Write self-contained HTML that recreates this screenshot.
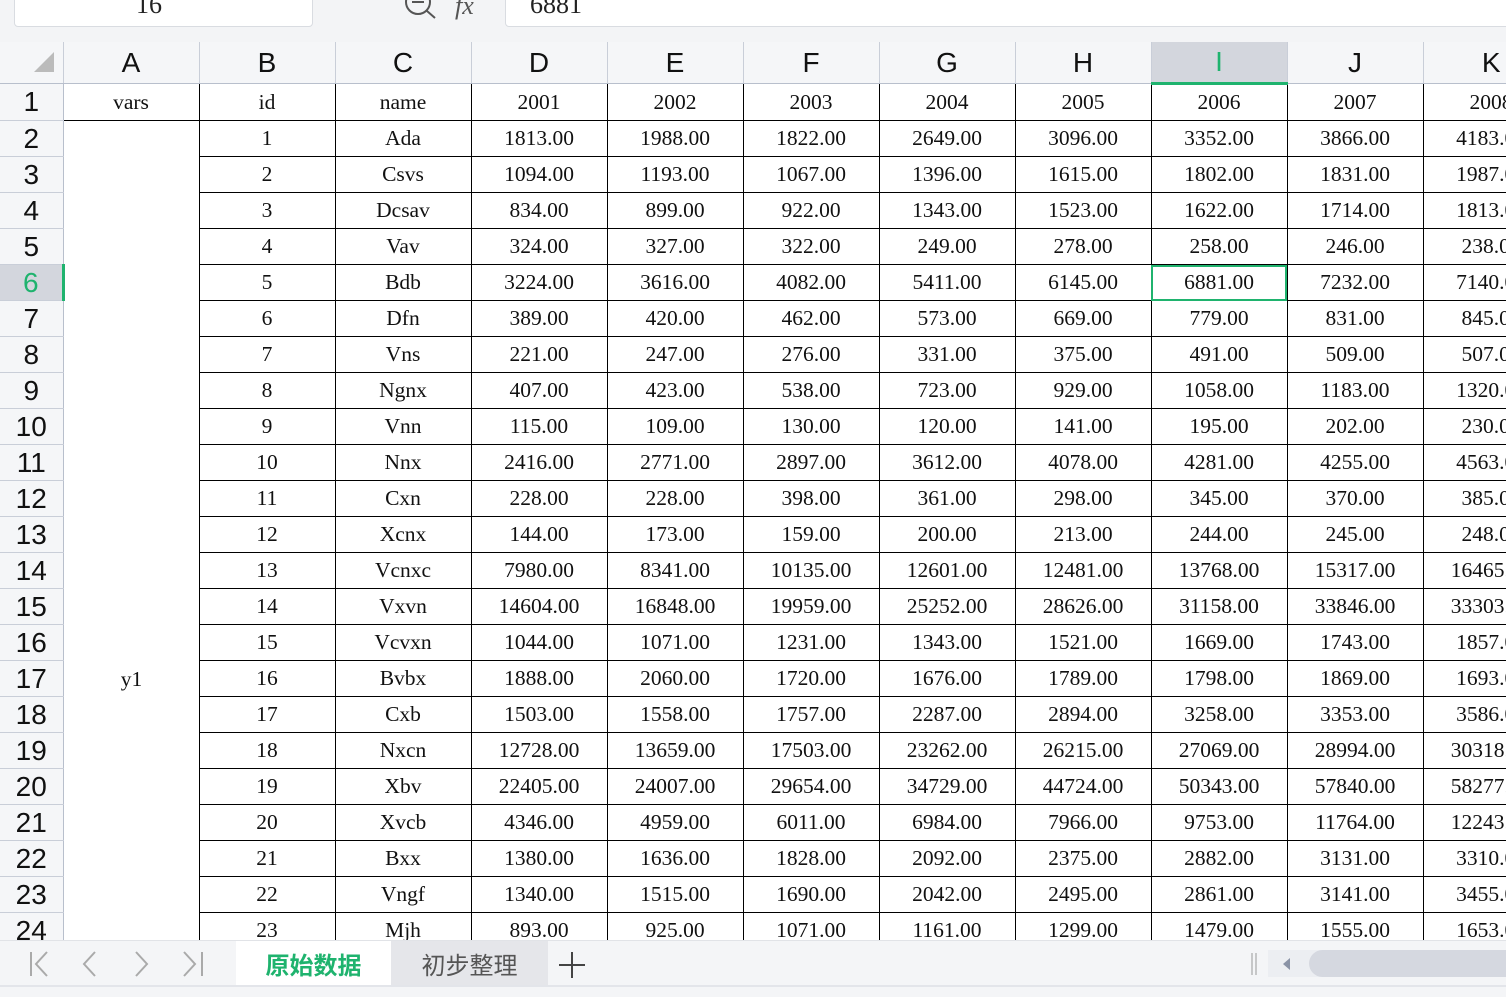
<!DOCTYPE html>
<html><head><meta charset="utf-8"><style>
body{margin:0;width:1506px;height:995px;overflow:hidden;background:#f3f4f6;position:relative;font-family:"Liberation Serif",serif}
.top{position:absolute;left:0;top:0;width:1506px;height:42px;background:#f3f4f6}
.nb{position:absolute;left:14px;top:-6px;width:297px;height:31px;background:#fff;border:1px solid #d9dce1;border-radius:4px;font:26px "Liberation Serif",serif;color:#222;text-indent:121px;line-height:20px}
.fx{position:absolute;left:505px;top:-6px;width:1010px;height:31px;background:#fff;border:1px solid #d9dce1;border-radius:4px;font:26px "Liberation Serif",serif;color:#222;text-indent:24px;line-height:20px}
table{position:absolute;left:0;top:42px;border-collapse:collapse;table-layout:fixed;width:1559px;background:#fff}
td{height:35px;padding:0;text-align:center;font-size:21.5px;color:#111;border:1px solid #000;white-space:nowrap;overflow:hidden}
tr.h td{height:40px;background:#f5f6f8;border:none;border-left:1px solid #c9ced8;border-bottom:1px solid #b8bfcc;font:28px "Liberation Sans",sans-serif;color:#111;padding:0}
td.r{background:#f5f6f8;border:none;border-right:1px solid #b8bfcc;border-bottom:1px solid #c9ced8;font:28px "Liberation Sans",sans-serif;color:#111;text-align:center}
td.sel{background:#d3d6dd!important;color:#1fb36e!important}
tr.h td.sel{border-bottom:3px solid #1fb36e}
td.r.sel{border-right:3px solid #1fb36e}
td.a{border-left:none}
td.cur{outline:2px solid #1fb36e;outline-offset:-2px}
.tabs{position:absolute;left:0;top:940px;width:1506px;height:45px;background:#f4f5f7;border-top:1px solid #e1e3e7}
.bot{position:absolute;left:0;top:985px;width:1506px;height:10px;background:#f4f5f7;border-top:2px solid #e3e5ea}
.t1{position:absolute;left:236px;top:0;width:155px;height:45px;background:#fff;color:#1fb36e;font:bold 24px "Noto Sans CJK SC",sans-serif;text-align:center;line-height:46px}
.t2{position:absolute;left:391px;top:0;width:157px;height:45px;background:#e5e6ea;color:#555;font:24px "Noto Sans CJK SC",sans-serif;text-align:center;line-height:46px}
</style></head><body>
<div class="top"><div class="nb">16</div>
<svg style="position:absolute;left:400px;top:0" width="90" height="22"><circle cx="18" cy="2" r="12" fill="none" stroke="#555" stroke-width="2"/><line x1="27" y1="11" x2="35" y2="18" stroke="#555" stroke-width="2"/><line x1="12" y1="2" x2="24" y2="2" stroke="#555" stroke-width="2"/><text x="55" y="14" font-size="26" font-style="italic" fill="#555" font-family="Liberation Serif">fx</text></svg>
<div class="fx">6881</div></div>
<table>
<colgroup><col style="width:63px"><col style="width:136px" span="11"></colgroup>
<tr class="h"><td style="border-left:none"><svg width="24" height="24" style="margin-left:26px;margin-top:6px"><polygon points="22,2 22,22 2,22" fill="#bbb"/></svg></td><td>A</td><td>B</td><td>C</td><td>D</td><td>E</td><td>F</td><td>G</td><td>H</td><td class="sel">I</td><td>J</td><td>K</td></tr>
<tr><td class="r">1</td><td class="a">vars</td><td>id</td><td>name</td><td>2001</td><td>2002</td><td>2003</td><td>2004</td><td>2005</td><td>2006</td><td>2007</td><td>2008</td></tr>
<tr><td class="r">2</td><td class="a" rowspan="23" style="border-bottom:none;vertical-align:top"><div style="padding-top:546px">y1</div></td><td>1</td><td>Ada</td><td>1813.00</td><td>1988.00</td><td>1822.00</td><td>2649.00</td><td>3096.00</td><td>3352.00</td><td>3866.00</td><td>4183.00</td></tr>
<tr><td class="r">3</td><td>2</td><td>Csvs</td><td>1094.00</td><td>1193.00</td><td>1067.00</td><td>1396.00</td><td>1615.00</td><td>1802.00</td><td>1831.00</td><td>1987.00</td></tr>
<tr><td class="r">4</td><td>3</td><td>Dcsav</td><td>834.00</td><td>899.00</td><td>922.00</td><td>1343.00</td><td>1523.00</td><td>1622.00</td><td>1714.00</td><td>1813.00</td></tr>
<tr><td class="r">5</td><td>4</td><td>Vav</td><td>324.00</td><td>327.00</td><td>322.00</td><td>249.00</td><td>278.00</td><td>258.00</td><td>246.00</td><td>238.00</td></tr>
<tr><td class="r sel">6</td><td>5</td><td>Bdb</td><td>3224.00</td><td>3616.00</td><td>4082.00</td><td>5411.00</td><td>6145.00</td><td class="cur">6881.00</td><td>7232.00</td><td>7140.00</td></tr>
<tr><td class="r">7</td><td>6</td><td>Dfn</td><td>389.00</td><td>420.00</td><td>462.00</td><td>573.00</td><td>669.00</td><td>779.00</td><td>831.00</td><td>845.00</td></tr>
<tr><td class="r">8</td><td>7</td><td>Vns</td><td>221.00</td><td>247.00</td><td>276.00</td><td>331.00</td><td>375.00</td><td>491.00</td><td>509.00</td><td>507.00</td></tr>
<tr><td class="r">9</td><td>8</td><td>Ngnx</td><td>407.00</td><td>423.00</td><td>538.00</td><td>723.00</td><td>929.00</td><td>1058.00</td><td>1183.00</td><td>1320.00</td></tr>
<tr><td class="r">10</td><td>9</td><td>Vnn</td><td>115.00</td><td>109.00</td><td>130.00</td><td>120.00</td><td>141.00</td><td>195.00</td><td>202.00</td><td>230.00</td></tr>
<tr><td class="r">11</td><td>10</td><td>Nnx</td><td>2416.00</td><td>2771.00</td><td>2897.00</td><td>3612.00</td><td>4078.00</td><td>4281.00</td><td>4255.00</td><td>4563.00</td></tr>
<tr><td class="r">12</td><td>11</td><td>Cxn</td><td>228.00</td><td>228.00</td><td>398.00</td><td>361.00</td><td>298.00</td><td>345.00</td><td>370.00</td><td>385.00</td></tr>
<tr><td class="r">13</td><td>12</td><td>Xcnx</td><td>144.00</td><td>173.00</td><td>159.00</td><td>200.00</td><td>213.00</td><td>244.00</td><td>245.00</td><td>248.00</td></tr>
<tr><td class="r">14</td><td>13</td><td>Vcnxc</td><td>7980.00</td><td>8341.00</td><td>10135.00</td><td>12601.00</td><td>12481.00</td><td>13768.00</td><td>15317.00</td><td>16465.00</td></tr>
<tr><td class="r">15</td><td>14</td><td>Vxvn</td><td>14604.00</td><td>16848.00</td><td>19959.00</td><td>25252.00</td><td>28626.00</td><td>31158.00</td><td>33846.00</td><td>33303.00</td></tr>
<tr><td class="r">16</td><td>15</td><td>Vcvxn</td><td>1044.00</td><td>1071.00</td><td>1231.00</td><td>1343.00</td><td>1521.00</td><td>1669.00</td><td>1743.00</td><td>1857.00</td></tr>
<tr><td class="r">17</td><td>16</td><td>Bvbx</td><td>1888.00</td><td>2060.00</td><td>1720.00</td><td>1676.00</td><td>1789.00</td><td>1798.00</td><td>1869.00</td><td>1693.00</td></tr>
<tr><td class="r">18</td><td>17</td><td>Cxb</td><td>1503.00</td><td>1558.00</td><td>1757.00</td><td>2287.00</td><td>2894.00</td><td>3258.00</td><td>3353.00</td><td>3586.00</td></tr>
<tr><td class="r">19</td><td>18</td><td>Nxcn</td><td>12728.00</td><td>13659.00</td><td>17503.00</td><td>23262.00</td><td>26215.00</td><td>27069.00</td><td>28994.00</td><td>30318.00</td></tr>
<tr><td class="r">20</td><td>19</td><td>Xbv</td><td>22405.00</td><td>24007.00</td><td>29654.00</td><td>34729.00</td><td>44724.00</td><td>50343.00</td><td>57840.00</td><td>58277.00</td></tr>
<tr><td class="r">21</td><td>20</td><td>Xvcb</td><td>4346.00</td><td>4959.00</td><td>6011.00</td><td>6984.00</td><td>7966.00</td><td>9753.00</td><td>11764.00</td><td>12243.00</td></tr>
<tr><td class="r">22</td><td>21</td><td>Bxx</td><td>1380.00</td><td>1636.00</td><td>1828.00</td><td>2092.00</td><td>2375.00</td><td>2882.00</td><td>3131.00</td><td>3310.00</td></tr>
<tr><td class="r">23</td><td>22</td><td>Vngf</td><td>1340.00</td><td>1515.00</td><td>1690.00</td><td>2042.00</td><td>2495.00</td><td>2861.00</td><td>3141.00</td><td>3455.00</td></tr>
<tr><td class="r">24</td><td>23</td><td>Mjh</td><td>893.00</td><td>925.00</td><td>1071.00</td><td>1161.00</td><td>1299.00</td><td>1479.00</td><td>1555.00</td><td>1653.00</td></tr>
</table>
<div class="tabs">
<svg style="position:absolute;left:0;top:8px" width="220" height="30" fill="none" stroke="#aaa" stroke-width="2"><line x1="31" y1="3" x2="31" y2="27"/><polyline points="47,3 36,15 47,27"/><polyline points="95,3 84,15 95,27"/><polyline points="136,3 147,15 136,27"/><polyline points="184,3 195,15 184,27"/><line x1="202" y1="3" x2="202" y2="27"/></svg>
<div class="t1">原始数据</div><div class="t2">初步整理</div>
<svg style="position:absolute;left:558px;top:10px" width="28" height="28" stroke="#444" stroke-width="2"><line x1="14" y1="1" x2="14" y2="27"/><line x1="1" y1="14" x2="27" y2="14"/></svg>
<svg style="position:absolute;left:1250px;top:12px" width="10" height="22" stroke="#999" stroke-width="1"><line x1="2" y1="0" x2="2" y2="22"/><line x1="6" y1="0" x2="6" y2="22"/></svg>
<div style="position:absolute;left:1268px;top:9px;width:238px;height:27px;background:#eceef2"></div>
<svg style="position:absolute;left:1282px;top:16px" width="10" height="14"><polygon points="8,1 8,13 1,7" fill="#8a93a6"/></svg>
<div style="position:absolute;left:1309px;top:9px;width:220px;height:27px;background:#d5d8e0;border-radius:14px"></div>
</div>
<div class="bot"></div>
</body></html>
